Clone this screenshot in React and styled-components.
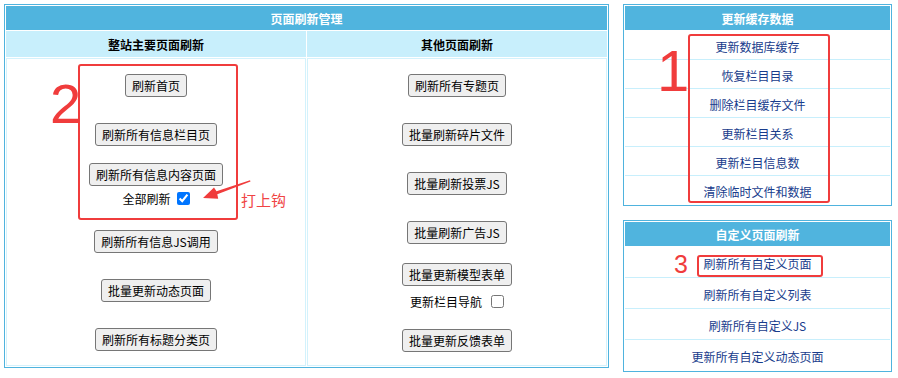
import React from "react";
import styled, { createGlobalStyle } from "styled-components";

const GlobalStyle = createGlobalStyle`
  body {
    margin: 0;
    background: #fff;
    font-family: "Noto Sans CJK SC", "Liberation Sans", sans-serif;
    font-size: 12px;
    color: #000;
  }
`;

const Page = styled.div`
  position: relative;
  display: flex;
  align-items: flex-start;
  gap: 14px;
  padding: 4px;
  width: 898px;
  height: 378px;
  box-sizing: border-box;
`;

const Panel = styled.div`
  border: 1px solid #4fb3de;
  padding: 1px;
  background: #fff;
  box-sizing: border-box;
  width: ${(p) => p.$width}px;
`;

const MainGrid = styled.div`
  display: grid;
  grid-template-columns: 1fr 1fr;
  grid-template-rows: 24px 26px 308px;
  gap: 1px;
`;

const Header = styled.div`
  grid-column: 1 / -1;
  height: 24px;
  background: #50b4de;
  color: #fff;
  font-weight: bold;
  font-size: 12px;
  display: flex;
  align-items: center;
  justify-content: center;
`;

const SubHeader = styled.div`
  background: #c8effc;
  font-weight: bold;
  font-size: 12px;
  display: flex;
  align-items: center;
  justify-content: center;
`;

const Column = styled.div`
  border: 1px solid #d3f2fc;
  display: flex;
  flex-direction: column;
  align-items: center;
`;

const Item = styled.div`
  margin-top: ${(p) => p.$mt}px;
  display: flex;
  flex-direction: column;
  align-items: center;
`;

const Button = styled.button`
  font-family: "Noto Sans CJK SC", "Liberation Sans", sans-serif;
  font-size: 12px;
  line-height: 19px;
  padding: 1px 6px;
  border: 1px solid #767676;
  border-radius: 3px;
  background: #efefef;
  color: #000;
  cursor: pointer;
`;

const CheckRow = styled.label`
  margin-top: ${(p) => p.$mt}px;
  height: 18px;
  display: flex;
  align-items: center;
  font-size: 12px;
`;

const Check = styled.input`
  width: 13px;
  height: 13px;
  margin: 0 0 0 ${(p) => p.$gap}px;
`;

const LinkRow = styled.div`
  box-sizing: border-box;
  height: ${(p) => p.$h}px;
  padding-top: 3px;
  display: flex;
  align-items: center;
  justify-content: center;
  color: #183c8c;
  font-size: 12px;
  & + & {
    border-top: 1px solid #c8effc;
  }
`;

const Side = styled.div`
  display: flex;
  flex-direction: column;
  gap: 14px;
`;

const MarkBox = styled.div`
  position: absolute;
  left: ${(p) => p.$x}px;
  top: ${(p) => p.$y}px;
  width: ${(p) => p.$w}px;
  height: ${(p) => p.$h}px;
  border: 2px solid #f03c3c;
  border-radius: 3px;
  box-sizing: border-box;
  pointer-events: none;
`;

const MarkNum = styled.div`
  position: absolute;
  left: ${(p) => p.$x}px;
  top: ${(p) => p.$y}px;
  font-family: "Liberation Sans", sans-serif;
  font-size: ${(p) => p.$size}px;
  line-height: 1;
  color: #f03c3c;
`;

const MarkText = styled.div`
  position: absolute;
  left: 241px;
  top: 190px;
  font-size: 15px;
  line-height: 20px;
  color: #f04444;
`;

const Arrow = styled.svg`
  position: absolute;
  left: 200px;
  top: 175px;
`;

const leftItems = [
  { label: "刷新首页", mt: 15 },
  { label: "刷新所有信息栏目页", mt: 26 },
  { label: "刷新所有信息内容页面", mt: 17, check: { label: "全部刷新", checked: true, mt: 3, gap: 6 } },
  { label: "刷新所有信息JS调用", mt: 23 },
  { label: "批量更新动态页面", mt: 26 },
  { label: "刷新所有标题分类页", mt: 26 },
];

const rightItems = [
  { label: "刷新所有专题页", mt: 15 },
  { label: "批量刷新碎片文件", mt: 26 },
  { label: "批量刷新投票JS", mt: 26 },
  { label: "批量刷新广告JS", mt: 26 },
  { label: "批量更新模型表单", mt: 19, check: { label: "更新栏目导航", checked: false, mt: 6, gap: 9 } },
  { label: "批量更新反馈表单", mt: 19 },
];

const cacheLinks = ["更新数据库缓存", "恢复栏目目录", "删除栏目缓存文件", "更新栏目关系", "更新栏目信息数", "清除临时文件和数据"];
const customLinks = ["刷新所有自定义页面", "刷新所有自定义列表", "刷新所有自定义JS", "更新所有自定义动态页面"];

const ButtonColumn = ({ items }) => (
  <Column>
    {items.map((it) => (
      <Item key={it.label} $mt={it.mt}>
        <Button type="button">{it.label}</Button>
        {it.check && (
          <CheckRow $mt={it.check.mt}>
            {it.check.label}
            <Check type="checkbox" defaultChecked={it.check.checked} $gap={it.check.gap} />
          </CheckRow>
        )}
      </Item>
    ))}
  </Column>
);

const LinkPanel = ({ title, links, rowHeight }) => (
  <Panel $width={269}>
    <Header>{title}</Header>
    {links.map((l) => (
      <LinkRow key={l} $h={rowHeight}>{l}</LinkRow>
    ))}
  </Panel>
);

export default function App() {
  return (
    <>
      <GlobalStyle />
      <Page>
        <Panel $width={605}>
          <MainGrid>
            <Header>页面刷新管理</Header>
            <SubHeader>整站主要页面刷新</SubHeader>
            <SubHeader>其他页面刷新</SubHeader>
            <ButtonColumn items={leftItems} />
            <ButtonColumn items={rightItems} />
          </MainGrid>
        </Panel>
        <Side>
          <LinkPanel title="更新缓存数据" links={cacheLinks} rowHeight={29} />
          <LinkPanel title="自定义页面刷新" links={customLinks} rowHeight={31} />
        </Side>

        {/* annotations drawn over the screenshot */}
        <MarkBox $x={78} $y={64} $w={160} $h={156} />
        <MarkNum $x={50} $y={76} $size={56}>2</MarkNum>
        <Arrow width="55" height="30" viewBox="0 0 55 30">
          <polygon points="50,5.2 16.5,16.2 14,12.5 3,23 18.2,23.7 17.3,19.2 50.5,6.6" fill="#f03c3c" />
        </Arrow>
        <MarkText>打上钩</MarkText>

        <MarkBox $x={688} $y={34} $w={142} $h={169} />
        <MarkNum $x={657} $y={42} $size={58}>1</MarkNum>

        <MarkBox $x={697} $y={255} $w={126} $h={22} />
        <MarkNum $x={674} $y={252} $size={25}>3</MarkNum>
      </Page>
    </>
  );
}
